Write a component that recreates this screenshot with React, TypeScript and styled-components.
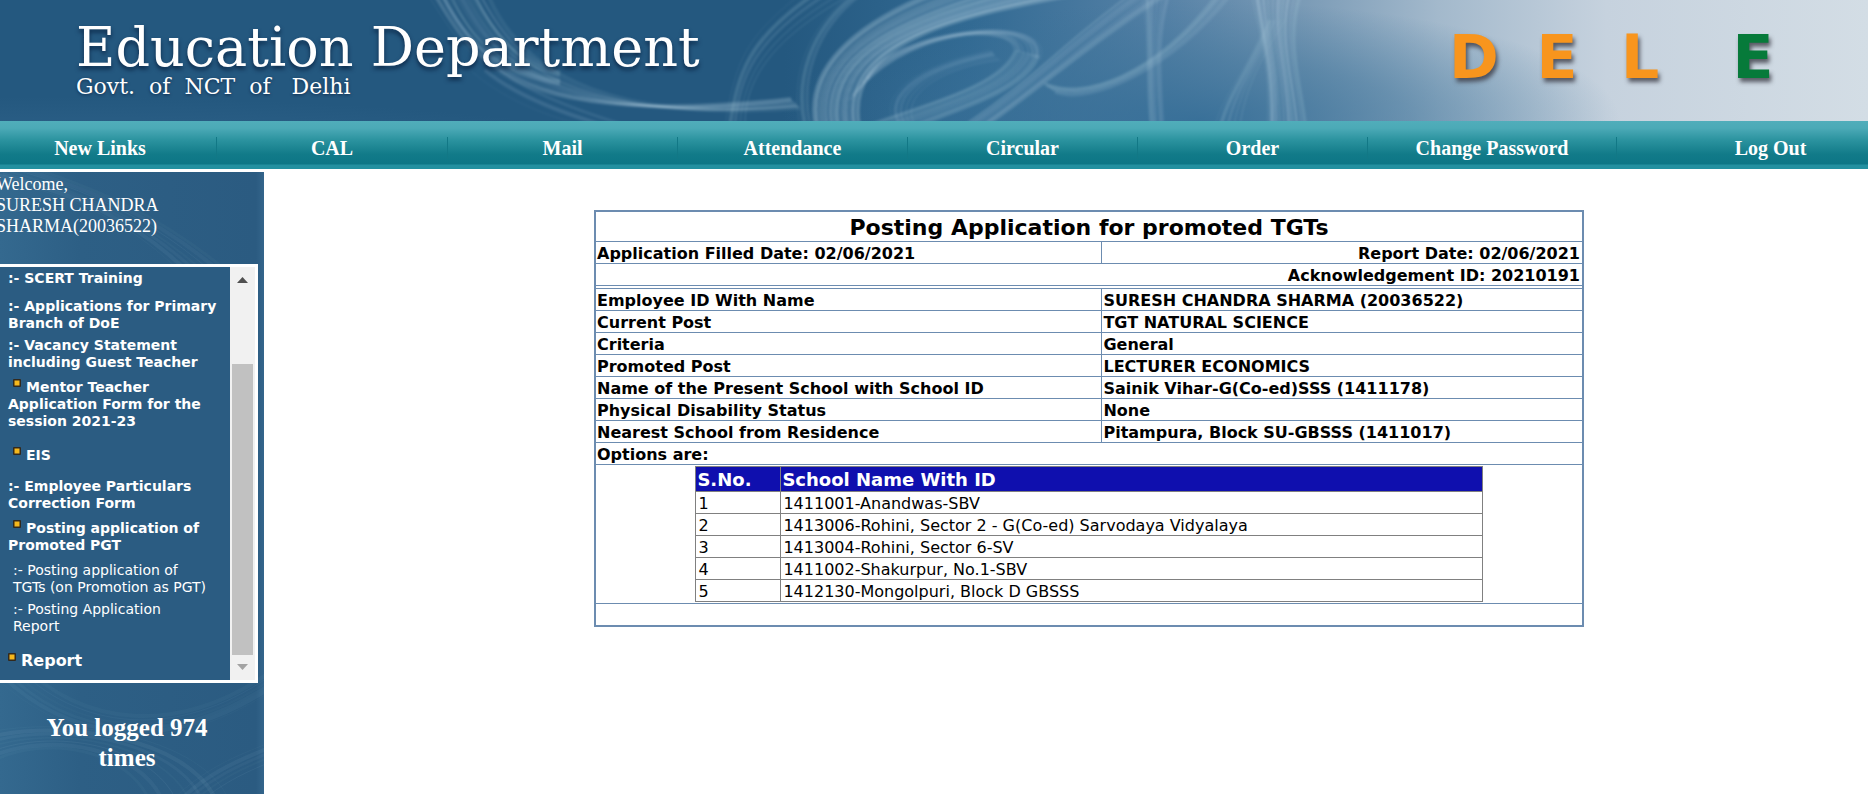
import React from 'react';
import styled, { createGlobalStyle } from 'styled-components';

const sans = '"DejaVu Sans", Verdana, sans-serif';
const serif = '"Liberation Serif", "Times New Roman", serif';
const line = '#6c8cb0';

const GlobalStyle = createGlobalStyle`
  *, *::before, *::after { box-sizing: border-box; }
  body { margin: 0; background: #fff; color: #000; font-family: ${sans}; }
  a { color: inherit; text-decoration: none; }
`;

const Page = styled.div`
  min-height: 100vh;
  display: flex;
  flex-direction: column;
  overflow-x: hidden;
`;

const Banner = styled.header`
  position: relative;
  height: 121px;
  display: flex;
  justify-content: space-between;
  align-items: flex-start;
  padding: 20px 80px 0 76px;
`;

const BannerArt = styled.svg`
  position: absolute;
  inset: 0;
  width: 100%;
  height: 100%;
  z-index: -1;
`;

const Titles = styled.div`
  color: #fff;
  font-family: "DejaVu Serif", serif;
  white-space: pre;
`;

const Title = styled.h1`
  margin: 0;
  font-size: 54px;
  line-height: 56px;
  font-weight: 400;
  text-shadow: 0 3px 4px rgba(0, 20, 50, 0.7);
`;

const Subtitle = styled.p`
  margin: 0;
  font-size: 22px;
  line-height: 22px;
  text-shadow: 0 1px 3px rgba(0, 20, 50, 0.6);
`;

const Logo = styled.div`
  display: flex;
  gap: 13px;
  padding-top: 2px;
  font-size: 60px;
  line-height: 70px;
  font-weight: 700;
  text-shadow: 2px 4px 4px rgba(60, 60, 70, 0.8);
`;

const Letter = styled.span<{ $green?: boolean }>`
  width: 70px;
  margin-left: ${(p) => (p.$green ? 30 : 0)}px;
  color: ${(p) => (p.$green ? '#067a3a' : '#f8951d')};
  text-align: center;
`;

const Nav = styled.nav`
  height: 48px;
  display: grid;
  grid-template-columns: 217fr 231fr 230fr 230fr 230fr 230fr 249fr 251fr;
  align-items: center;
  padding-bottom: 1px;
  background: linear-gradient(#50adba 0, #4caab7 7px, #2b939f 19px, #127b89 33px, #0d7686 43px, #2390a0 44px, #2390a0 48px);
`;

const NavLink = styled.a`
  height: 22px;
  margin-top: 7px;
  border-right: 1px solid #127886;
  color: #fff;
  font: 700 20px/22px ${serif};
  text-align: center;
  white-space: nowrap;
  &:first-child { padding-right: 16px; }
  &:last-child { padding-left: 56px; border-right: 0; }
`;

const Body = styled.div`
  flex: 1;
  display: grid;
  grid-template-columns: 264px 1fr;
  padding-top: 3px;
`;

const Sidebar = styled.aside`
  position: relative;
  overflow: hidden;
  color: #fff;
  background: linear-gradient(90deg, #34698f 0, #2d5f85 80px, #2b5b81 256px, #34658b 264px);
`;

const SidebarArt = styled.svg`
  position: absolute;
  left: 0;
  bottom: 0;
  width: 264px;
  height: 622px;
`;

const Welcome = styled.p`
  position: relative;
  height: 92px;
  margin: 0 0 0 -4px;
  padding-top: 2px;
  font: 18px/21px ${serif};
`;

const MenuFrame = styled.div`
  position: relative;
  width: 258px;
  height: 419px;
  display: flex;
  border: 3px solid #fff;
  border-left: 0;
  background: #2b5c82;
`;

const Menu = styled.ul`
  flex: 1;
  list-style: none;
  margin: 0;
  padding: 3px 0 0 8px;
  font-size: 14px;
  line-height: 17px;
  white-space: pre-line;
`;

const MenuItem = styled.li<{ $gap: number; $sub?: boolean; $large?: boolean }>`
  margin-bottom: ${(p) => p.$gap}px;
  padding-left: ${(p) => (p.$sub ? 5 : 0)}px;
  font-weight: ${(p) => (p.$sub ? 400 : 700)};
  font-size: ${(p) => (p.$large ? 16 : 14)}px;
`;

const BulletIcon = styled.svg<{ $indent?: boolean }>`
  width: 8px;
  height: 8px;
  margin: 0 5px 0 ${(p) => (p.$indent ? 5 : 0)}px;
  vertical-align: 5px;
`;

const ScrollTrack = styled.div`
  width: 25px;
  display: flex;
  flex-direction: column;
  align-items: center;
  background: #f1f1f1;
`;

const Arrow = styled.svg`
  width: 25px;
  height: 25px;
`;

const Thumb = styled.div`
  width: 21px;
  height: 291px;
  margin-top: auto;
  background: #c1c1c1;
`;

const Logged = styled.p`
  position: relative;
  margin: 0;
  padding: 30px 10px 0 0;
  font: 700 25px/30px ${serif};
  text-align: center;
`;

const Content = styled.main`
  padding: 38px 0 20px 46px;
`;

const Report = styled.table`
  width: 100%;
  max-width: 990px;
  margin: 0 auto;
  border-collapse: collapse;
  border: 2px solid ${line};
  font-size: 16px;
  line-height: 19px;
  font-weight: 700;
`;

const Cell = styled.td<{ $right?: boolean }>`
  padding: 2px 2px 0 1px;
  border: 1px solid ${line};
  text-align: ${(p) => (p.$right ? 'right' : 'left')};
`;

const Label = styled(Cell)`
  width: 508px;
  font-weight: 700;
`;

const Value = styled(Cell)`
  width: 482px;
`;

const Heading = styled.th`
  padding: 2px 1px 0;
  border: 1px solid ${line};
  font-size: 22px;
  line-height: 27px;
`;

const Divider = styled.td`
  height: 3px;
  padding: 0;
  border: 1px solid ${line};
`;

const OptionsCell = styled.td`
  padding: 1px;
  border: 1px solid ${line};
`;

const Options = styled.table`
  width: 80%;
  margin: 0 auto;
  border-collapse: collapse;
  font-weight: 400;
`;

const OptionHead = styled.th<{ $narrow?: boolean }>`
  width: ${(p) => (p.$narrow ? '85px' : 'auto')};
  padding: 2px 1px 0;
  border: 1px solid #808080;
  background: #0f0fae;
  color: #fff;
  font-size: 18px;
  line-height: 22px;
  text-align: left;
`;

const OptionCell = styled.td`
  padding: 2px 2px 0;
  border: 1px solid #808080;
`;

const navItems = ['New Links', 'CAL', 'Mail', 'Attendance', 'Circular', 'Order', 'Change Password', 'Log Out'];

type Entry = { text: string; gap: number; bullet?: boolean; sub?: boolean; large?: boolean };

const menu: Entry[] = [
  { text: ':- SCERT Training', gap: 11 },
  { text: ':- Applications for Primary\nBranch of DoE', gap: 5 },
  { text: ':- Vacancy Statement\nincluding Guest Teacher', gap: 8 },
  { text: 'Mentor Teacher\nApplication Form for the\nsession 2021-23', gap: 17, bullet: true },
  { text: 'EIS', gap: 14, bullet: true },
  { text: ':- Employee Particulars\nCorrection Form', gap: 8 },
  { text: 'Posting application of\nPromoted PGT', gap: 8, bullet: true },
  { text: ':- Posting application of\nTGTs (on Promotion as PGT)', gap: 5, sub: true },
  { text: ':- Posting Application\nReport', gap: 17, sub: true },
  { text: 'Report', gap: 0, bullet: true, large: true },
];

const details = [
  ['Employee ID With Name', 'SURESH CHANDRA SHARMA (20036522)'],
  ['Current Post', 'TGT NATURAL SCIENCE'],
  ['Criteria', 'General'],
  ['Promoted Post', 'LECTURER ECONOMICS'],
  ['Name of the Present School with School ID', 'Sainik Vihar-G(Co-ed)SSS (1411178)'],
  ['Physical Disability Status', 'None'],
  ['Nearest School from Residence', 'Pitampura, Block SU-GBSSS (1411017)'],
];

const schools = [
  '1411001-Anandwas-SBV',
  '1413006-Rohini, Sector 2 - G(Co-ed) Sarvodaya Vidyalaya',
  '1413004-Rohini, Sector 6-SV',
  '1411002-Shakurpur, No.1-SBV',
  '1412130-Mongolpuri, Block D GBSSS',
];

/* A bundle blends from one cubic curve to another, giving a ribbon of fine strands. */
type Bundle = { from: number[]; to: number[]; count: number; opacity: number };

const bannerBundles: Bundle[] = [
  { from: [428, -5, 470, 60, 500, 130, 790, 98], to: [488, -5, 515, 60, 590, 125, 800, 108], count: 10, opacity: 0.16 },
  { from: [436, -5, 455, 40, 490, 75, 560, 85], to: [480, -5, 500, 30, 520, 60, 560, 72], count: 7, opacity: 0.2 },
  { from: [470, 70, 510, 105, 560, 120, 600, 130], to: [500, 70, 530, 95, 600, 118, 640, 130], count: 3, opacity: 0.12 },
  { from: [800, -5, 740, 40, 735, 70, 725, 125], to: [850, -5, 770, 40, 745, 80, 745, 125], count: 5, opacity: 0.15 },
  { from: [850, -5, 805, 30, 790, 80, 800, 125], to: [860, -5, 815, 30, 800, 80, 810, 125], count: 3, opacity: 0.15 },
  { from: [930, -8, 850, 25, 800, 70, 815, 130], to: [1090, -8, 960, 15, 840, 40, 860, 130], count: 26, opacity: 0.24 },
  { from: [870, 75, 890, 30, 1060, 10, 1040, 60], to: [850, 100, 900, 30, 1010, 20, 1015, 50], count: 7, opacity: 0.17 },
  { from: [1040, 55, 1030, 90, 960, 110, 915, 128], to: [1015, 50, 1000, 90, 900, 110, 860, 128], count: 12, opacity: 0.15 },
  { from: [895, 125, 880, 100, 900, 70, 990, 50], to: [915, 125, 900, 100, 930, 70, 1000, 60], count: 5, opacity: 0.12 },
  { from: [1170, -5, 1090, 45, 1040, 90, 985, 128], to: [1130, -5, 1060, 45, 1040, 75, 960, 128], count: 8, opacity: 0.18 },
  { from: [1042, 82, 1080, 100, 1150, 80, 1215, -5], to: [1055, 92, 1090, 105, 1170, 70, 1230, -5], count: 6, opacity: 0.15 },
  { from: [1142, -5, 1150, 40, 1145, 80, 1150, 125], to: [1168, -5, 1155, 40, 1160, 80, 1162, 125], count: 6, opacity: 0.18 },
  { from: [1252, -5, 1260, 40, 1270, 60, 1268, 125], to: [1300, -5, 1285, 40, 1300, 80, 1305, 125], count: 10, opacity: 0.3 },
  { from: [1265, 20, 1255, 60, 1225, 90, 1215, 125], to: [1285, 20, 1260, 60, 1245, 90, 1240, 125], count: 5, opacity: 0.15 },
];

const sidebarBundles: Bundle[] = [
  { from: [-10, 5, 60, 20, 130, 45, 190, 110], to: [30, -5, 90, 15, 160, 40, 240, 110], count: 7, opacity: 0.05 },
  { from: [-10, 500, 60, 570, 160, 590, 270, 520], to: [20, 490, 80, 555, 180, 565, 270, 500], count: 6, opacity: 0.04 },
  { from: [-10, 560, 60, 545, 200, 560, 230, 630], to: [-10, 590, 50, 560, 130, 580, 150, 630], count: 7, opacity: 0.06 },
  { from: [170, 630, 210, 590, 250, 580, 270, 570], to: [200, 630, 230, 605, 260, 595, 270, 590], count: 5, opacity: 0.05 },
];

function Strands({ bundles, color }: { bundles: Bundle[]; color: string }) {
  return (
    <g fill="none" stroke={color}>
      {bundles.map((b, i) =>
        Array.from({ length: b.count }, (_, n) => {
          const t = n / (b.count - 1);
          const p = b.from.map((v, k) => Math.round(v + (b.to[k] - v) * t));
          return (
            <path
              key={`${i}-${n}`}
              d={`M${p[0]} ${p[1]}C${p[2]} ${p[3]} ${p[4]} ${p[5]} ${p[6]} ${p[7]}`}
              strokeWidth={1 + ((n * 7) % 4)}
              opacity={b.opacity * (0.6 + ((n * 5) % 3) * 0.3)}
            />
          );
        }),
      )}
    </g>
  );
}

function Bullet({ indent }: { indent?: boolean }) {
  return (
    <BulletIcon $indent={indent} viewBox="0 0 8 8" aria-hidden="true">
      <rect width="8" height="8" rx="1" fill="#33291c" />
      <rect x="1.500" y="1.500" width="5" height="5" fill="#f5b81c" />
    </BulletIcon>
  );
}

export default function App() {
  return (
    <Page>
      <GlobalStyle />
      <Banner>
        <BannerArt viewBox="0 0 1868 121" preserveAspectRatio="none" aria-hidden="true">
          <defs>
            <linearGradient id="sky">
              <stop offset="0" stopColor="#24587f" />
              <stop offset="0.42" stopColor="#24587f" />
              <stop offset="0.52" stopColor="#326a93" />
              <stop offset="0.62" stopColor="#5581a6" />
              <stop offset="0.7" stopColor="#7c9cb7" />
              <stop offset="0.77" stopColor="#a3b9cc" />
              <stop offset="0.86" stopColor="#c6d2de" />
              <stop offset="1" stopColor="#d3dde5" />
            </linearGradient>
            <radialGradient id="haze" cx="0.3" cy="1" r="0.7">
              <stop offset="0" stopColor="#4478a0" stopOpacity="0.5" />
              <stop offset="1" stopColor="#4478a0" stopOpacity="0" />
            </radialGradient>
            <radialGradient id="pool">
              <stop offset="0" stopColor="#2f6a94" stopOpacity="0.8" />
              <stop offset="0.5" stopColor="#3a7198" stopOpacity="0.5" />
              <stop offset="1" stopColor="#3a7198" stopOpacity="0" />
            </radialGradient>
            <filter id="soft"><feGaussianBlur stdDeviation="1" /></filter>
          </defs>
          <rect width="1868" height="121" fill="url(#sky)" />
          <ellipse cx="250" cy="121" rx="500" ry="60" fill="url(#haze)" />
          <ellipse cx="1200" cy="121" rx="420" ry="120" fill="url(#pool)" />
          <g filter="url(#soft)">
            <Strands bundles={bannerBundles} color="#b4d0e0" />
          </g>
        </BannerArt>
        <Titles>
          <Title>Education Department</Title>
          <Subtitle>{'Govt.  of  NCT  of   Delhi'}</Subtitle>
        </Titles>
        <Logo>
          <Letter>D</Letter>
          <Letter>E</Letter>
          <Letter>L</Letter>
          <Letter $green>E</Letter>
        </Logo>
      </Banner>

      <Nav>
        {navItems.map((item) => (
          <NavLink key={item} href="#">{item}</NavLink>
        ))}
      </Nav>

      <Body>
        <Sidebar>
          <SidebarArt viewBox="0 0 264 622" aria-hidden="true">
            <Strands bundles={sidebarBundles} color="#b4d8e8" />
          </SidebarArt>
          <Welcome>
            Welcome,<br />SURESH CHANDRA<br />SHARMA(20036522)
          </Welcome>
          <MenuFrame>
            <Menu>
              {menu.map((m) => (
                <MenuItem key={m.text} $gap={m.gap} $sub={m.sub} $large={m.large}>
                  {m.bullet && <Bullet indent={!m.large} />}
                  <a href="#">{m.text}</a>
                </MenuItem>
              ))}
            </Menu>
            <ScrollTrack aria-hidden="true">
              <Arrow viewBox="0 0 25 25"><path d="M7 16L12.500 10L18 16Z" fill="#505050" /></Arrow>
              <Thumb />
              <Arrow viewBox="0 0 25 25"><path d="M7 9L12.500 15L18 9Z" fill="#a3a3a3" /></Arrow>
            </ScrollTrack>
          </MenuFrame>
          <Logged>
            You logged 974<br />times
          </Logged>
        </Sidebar>

        <Content>
          <Report>
            <tbody>
              <tr><Heading colSpan={2}>Posting Application for promoted TGTs</Heading></tr>
              <tr>
                <Label>Application Filled Date: 02/06/2021</Label>
                <Value $right>Report Date: 02/06/2021</Value>
              </tr>
              <tr><Cell colSpan={2} $right>Acknowledgement ID: 20210191</Cell></tr>
              <tr><Divider colSpan={2} /></tr>
              {details.map(([label, value]) => (
                <tr key={label}>
                  <Label as="th" scope="row">{label}</Label>
                  <Value>{value}</Value>
                </tr>
              ))}
              <tr><Cell colSpan={2}>Options are:</Cell></tr>
              <tr>
                <OptionsCell colSpan={2}>
                  <Options>
                    <thead>
                      <tr>
                        <OptionHead $narrow>S.No.</OptionHead>
                        <OptionHead>School Name With ID</OptionHead>
                      </tr>
                    </thead>
                    <tbody>
                      {schools.map((school, i) => (
                        <tr key={school}>
                          <OptionCell>{i + 1}</OptionCell>
                          <OptionCell>{school}</OptionCell>
                        </tr>
                      ))}
                    </tbody>
                  </Options>
                </OptionsCell>
              </tr>
              <tr><Cell colSpan={2}>&nbsp;</Cell></tr>
            </tbody>
          </Report>
        </Content>
      </Body>
    </Page>
  );
}
